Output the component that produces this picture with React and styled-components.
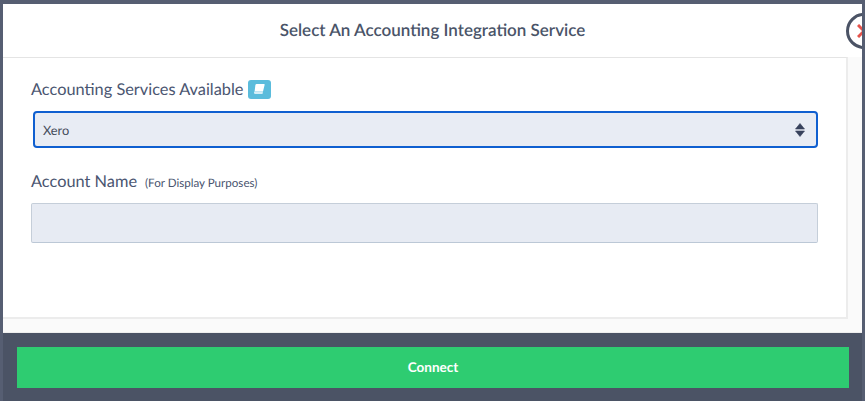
import React from 'react'
import styled, { createGlobalStyle } from 'styled-components'

const GlobalStyle = createGlobalStyle`
  html, body {
    margin: 0;
    padding: 0;
    height: 100%;
    background: #565e72;
    overflow: hidden;
  }
  * {
    box-sizing: border-box;
  }
`

function App() {
  return (
    <Page>
      <GlobalStyle />
      <Modal>
        <Header>
          <Title>Select An Accounting Integration Service</Title>
        </Header>
        <BodyWrap>
          <Body>
            <LabelRow>
              <Label>Accounting Services Available</Label>
              <HelpBadge>
                <svg width="14" height="13" viewBox="0 0 14 13">
                  <path d="M4.600 1h7.200c.7 0 1 .5.800 1.100L11 8.500H2.600L3.400 2c.1-.6.600-1 1.200-1z" fill="#fff" />
                  <path d="M2.600 8.500H11l-.5 2.500H3c-1.300 0-1.400-2.500-.4-2.500z" fill="#d5eef7" />
                </svg>
              </HelpBadge>
            </LabelRow>
            <SelectBox>
              <span>Xero</span>
              <svg width="10" height="14" viewBox="0 0 10 14">
                <path d="M5 .5 9.500 6H.5zM5 13.500.5 8h9z" fill="#37425c" stroke="#37425c" strokeWidth=".6" strokeLinejoin="round" />
              </svg>
            </SelectBox>
            <NameRow>
              <Label>Account Name</Label>
              <Hint>(For Display Purposes)</Hint>
            </NameRow>
            <NameInput />
          </Body>
        </BodyWrap>
        <CloseButton>
          <svg width="14" height="14" viewBox="0 0 14 14">
            <path d="M1 1 13 13M1 13 13 1" stroke="#e5534b" strokeWidth="3" />
          </svg>
        </CloseButton>
      </Modal>
      <Footer>
        <ConnectButton>Connect</ConnectButton>
      </Footer>
    </Page>
  )
}

export default App

const Page = styled.div`
  width: 865px;
  height: 401px;
  padding: 4px 3px 0 3px;
  background: #565e72;
  font-family: Lato, "Liberation Sans", sans-serif;
  text-rendering: geometricPrecision;
  overflow: hidden;
`

const Modal = styled.div`
  position: relative;
  height: 329px;
  background: #fafafa;
  border-bottom: 1px solid #eeeeee;
  overflow: hidden;
`

const Header = styled.div`
  height: 53px;
  background: #fff;
  display: flex;
  align-items: center;
  justify-content: center;
  padding: 0 0 2px 0;
`

const Title = styled.h1`
  margin: 0;
  font-size: 17px;
  font-weight: 600;
  color: #4a5468;
`

const BodyWrap = styled.div`
  height: 262px;
  padding-right: 14px;
`

const Body = styled.div`
  height: 262px;
  background: #fff;
  border-top: 1px solid #e4e4e4;
  border-right: 2px solid #ececec;
  border-bottom: 2px solid #ececec;
  padding: 20px 28px 0 28px;
`

const LabelRow = styled.div`
  display: flex;
  align-items: center;
  gap: 4px;
  height: 22px;
`

const Label = styled.span`
  font-size: 16.350px;
  color: #4a5570;
`

const HelpBadge = styled.span`
  width: 23px;
  height: 19px;
  border-radius: 3px;
  background: #5bbcdc;
  display: flex;
  align-items: center;
  justify-content: center;
`

const SelectBox = styled.div`
  margin: 11px 0 0 2px;
  width: 785px;
  height: 37px;
  padding: 0 11px 0 8px;
  display: flex;
  align-items: center;
  justify-content: space-between;
  background: #e8ecf4;
  border: 2px solid #0f5fd0;
  border-radius: 4px;
  font-size: 12.800px;
  color: #444b5a;
`

const NameRow = styled.div`
  display: flex;
  align-items: baseline;
  gap: 8px;
  margin-top: 24px;
  height: 22px;
`

const Hint = styled.span`
  font-size: 11.600px;
  color: #4a5570;
`

const NameInput = styled.div`
  margin-top: 9px;
  width: 787px;
  height: 40px;
  background: #e7ebf3;
  border: 1px solid #c5ced9;
  border-bottom-color: #bcc8d6;
  border-radius: 2px;
`

const CloseButton = styled.div`
  position: absolute;
  left: 843px;
  top: 9px;
  width: 36px;
  height: 36px;
  border-radius: 50%;
  background: #fff;
  border: 3px solid #4b5365;
  display: flex;
  align-items: center;
  justify-content: center;
`

const Footer = styled.div`
  height: 68px;
  padding: 14px 13px 0 14px;
  background: #4b5365;
`

const ConnectButton = styled.div`
  height: 41px;
  padding-bottom: 2px;
  background: #2ecc71;
  color: #fff;
  font-size: 13.500px;
  font-weight: 700;
  display: flex;
  align-items: center;
  justify-content: center;
`
